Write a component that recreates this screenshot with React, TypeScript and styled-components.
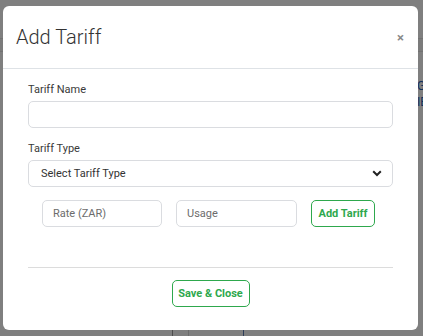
import React from "react";
import styled, { createGlobalStyle } from "styled-components";

const GlobalStyle = createGlobalStyle`
  html, body {
    margin: 0;
    padding: 0;
    width: 423px;
    height: 336px;
    overflow: hidden;
    background: #fff;
    font-family: Roboto, "Liberation Sans", sans-serif;
  }
  * { box-sizing: border-box; }
`;

const Page = styled.div`
  position: relative;
  width: 423px;
  height: 336px;
  display: flex;
  flex-direction: column;
`;

const TopBand = styled.div`
  margin-top: 38px;
  height: 14px;
  border-top: 1px solid #e4e4e4;
  border-bottom: 1px solid #e4e4e4;
  background: #f7f7f7;
`;

const SideLinks = styled.div`
  align-self: flex-end;
  margin-top: 28px;
  width: 6px;
  display: flex;
  flex-direction: column;
  gap: 3px;
  overflow: hidden;
  color: #1f5fb8;
  font-size: 12px;
  line-height: 13px;
`;

const BottomCells = styled.div`
  margin-top: auto;
  height: 8px;
  display: flex;
  padding-left: 172px;
`;

const Cell = styled.div<{ w: number; line?: string }>`
  width: ${(p) => p.w}px;
  border-left: 1px solid ${(p) => p.line || "#d8d8d8"};
`;

const Overlay = styled.div`
  position: absolute;
  inset: 0;
  background: rgba(0, 0, 0, 0.5);
  padding: 6px 5px 6px 3px;
  display: flex;
`;

const Modal = styled.div`
  flex: 1;
  background: #fff;
  border-radius: 6px;
  display: flex;
  flex-direction: column;
`;

const Header = styled.div`
  height: 63px;
  padding: 16px 13px 0 13px;
  border-bottom: 1px solid #dee2e6;
  display: flex;
  align-items: flex-start;
  justify-content: space-between;
`;

const Title = styled.h5`
  margin: 0;
  font-size: 20px;
  font-weight: 300;
  line-height: 30px;
  color: #333;
`;

const Close = styled.span`
  margin-top: 9px;
  margin-right: 1px;
  font-size: 13px;
  line-height: 14px;
  font-weight: 700;
  color: #888;
`;

const Body = styled.div`
  padding: 13px 25px 0 25px;
  display: flex;
  flex-direction: column;
`;

const Label = styled.label`
  font-size: 11px;
  line-height: 16px;
  color: #3a3a3a;
  margin-bottom: 3px;
`;

const Group = styled.div`
  display: flex;
  flex-direction: column;
  margin-bottom: 13px;
`;

const Input = styled.input`
  height: 27px;
  width: 100%;
  border: 1px solid #dadce0;
  border-radius: 5px;
  padding: 0 10px;
  font-family: inherit;
  font-size: 11px;
  color: #333;
  outline: none;
  &::placeholder { color: #6c6c6c; }
`;

const SelectBox = styled.div`
  height: 27px;
  border: 1px solid #dadce0;
  border-radius: 5px;
  padding: 0 10px 0 12px;
  display: flex;
  align-items: center;
  justify-content: space-between;
  font-size: 11px;
  color: #333;
`;

const Row = styled.div`
  display: grid;
  grid-template-columns: 120px 121px 64px;
  gap: 14px;
  padding-left: 14px;
`;

const OutlineButton = styled.button<{ w?: number }>`
  height: 27px;
  width: ${(p) => (p.w ? `${p.w}px` : "100%")};
  background: #fff;
  border: 1px solid #2ea84d;
  border-radius: 5px;
  color: #2ea84d;
  font-family: inherit;
  font-size: 11px;
  font-weight: 700;
  padding: 0;
`;

const Footer = styled.div`
  margin: 40px 25px 0 25px;
  border-top: 1px solid #dcdcdc;
  padding-top: 12px;
  display: flex;
  justify-content: center;
`;

function Chevron() {
  return (
    <svg width="10" height="7" viewBox="0 0 10 7">
      <path d="M1.2 1.2 L5 5 L8.8 1.2" fill="none" stroke="#222" strokeWidth="2" />
    </svg>
  );
}

export default function App() {
  return (
    <>
      <GlobalStyle />
      <Page>
        <TopBand />
        <SideLinks>
          <span>G</span>
          <span>IE</span>
        </SideLinks>
        <BottomCells>
          <Cell w={16} line="#9a9a9a" />
          <Cell w={55} />
          <Cell w={60} line="#5a7ab0" />
        </BottomCells>
        <Overlay>
          <Modal>
            <Header>
              <Title>Add Tariff</Title>
              <Close>×</Close>
            </Header>
            <Body>
              <Group>
                <Label>Tariff Name</Label>
                <Input />
              </Group>
              <Group>
                <Label>Tariff Type</Label>
                <SelectBox>
                  <span>Select Tariff Type</span>
                  <Chevron />
                </SelectBox>
              </Group>
              <Row>
                <Input placeholder="Rate (ZAR)" />
                <Input placeholder="Usage" />
                <OutlineButton>Add Tariff</OutlineButton>
              </Row>
            </Body>
            <Footer>
              <OutlineButton w={78}>Save &amp; Close</OutlineButton>
            </Footer>
          </Modal>
        </Overlay>
      </Page>
    </>
  );
}
